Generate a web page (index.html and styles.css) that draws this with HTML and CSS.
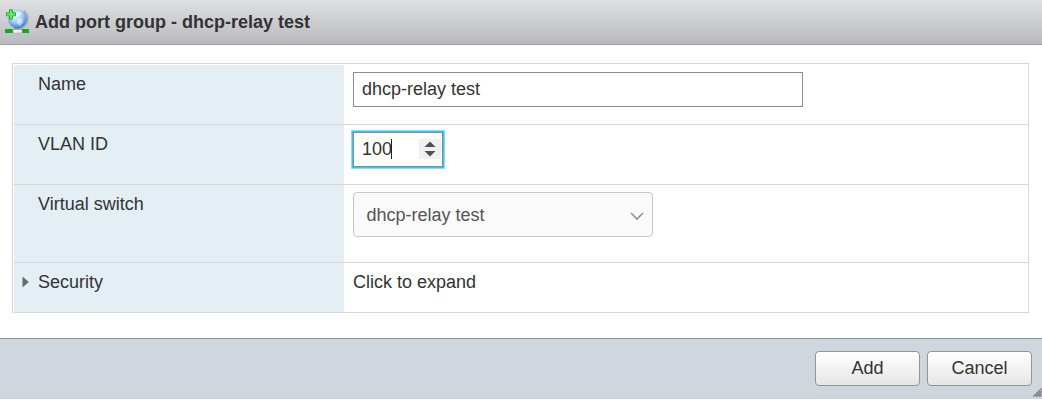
FILE: index.html
```html
<!DOCTYPE html>
<html lang="en">
<head>
<meta charset="utf-8">
<title>Add port group - dhcp-relay test</title>
<link rel="stylesheet" href="styles.css">
</head>
<body>
<div class="dialog">
  <header class="titlebar">
    <svg class="globe" width="24" height="25" viewBox="0 0 24 25">
      <defs>
        <radialGradient id="sphere" cx=".42" cy=".35" r=".65">
          <stop offset="0" stop-color="#e2f2fd"/>
          <stop offset=".55" stop-color="#a0caf4"/>
          <stop offset="1" stop-color="#3a7ad4"/>
        </radialGradient>
      </defs>
      <rect x="0" y="20" width="24" height="4" fill="#12ad16"/>
      <path d="M9 18h8v3h-8z" fill="#8e9298"/>
      <path d="M8 20.500h9v3.500h-9z" fill="#f1f1f1" stroke="#a4a4a4" stroke-width=".6"/>
      <circle cx="12.500" cy="9.800" r="9.600" fill="url(#sphere)"/>
      <path d="M11 3l5-1 1 3-3 2-4 1-2 4-2-2 1-4zM13 9l4 1 1 3-3 4-3-3z" fill="#f0f9ff" opacity=".55"/>
      <path d="M19 2C25.500 6.500 24 17 15 20" fill="none" stroke="#a5adb8" stroke-width="1.600"/>
      <path d="M4.500.8h3v3h3v3h-3v3.400h-3V6.800h-3v-3h3z" fill="#6be660" stroke="#2aae30" stroke-linejoin="round"/>
    </svg>
    <h1 class="title">Add port group - dhcp-relay test</h1>
  </header>
  <main class="content">
    <div class="form">
      <div class="row">
        <div class="label">Name</div>
        <div class="value"><div class="text-input">dhcp-relay test</div></div>
      </div>
      <div class="row">
        <div class="label">VLAN ID</div>
        <div class="value">
          <div class="number-input">
            <span class="number">100</span><span class="caret"></span>
            <svg class="spinner" width="22" height="20" viewBox="0 0 22 20">
              <path d="M11 2.500l5.500 5.500h-11zM11 17.500L5.500 12h11z" fill="#505050"/>
            </svg>
          </div>
        </div>
      </div>
      <div class="row row-tall">
        <div class="label">Virtual switch</div>
        <div class="value">
          <div class="select">dhcp-relay test
            <svg width="14" height="9" viewBox="0 0 14 9"><path d="M1 1l6 6 6-6" fill="none" stroke="#949494" stroke-width="1.700"/></svg>
          </div>
        </div>
      </div>
      <div class="row row-short">
        <div class="label label-expand">
          <svg width="7" height="12" viewBox="0 0 7 12"><path d="M.5.5L6.800 6l-6.300 5.500z" fill="#6c6c6c"/></svg>Security</div>
        <div class="value value-text">Click to expand</div>
      </div>
    </div>
  </main>
  <footer class="footer">
    <div class="button">Add</div>
    <div class="button">Cancel</div>
    <svg class="resizer" width="9" height="9" viewBox="0 0 9 9">
      <path d="M8.500 0v8.500H0z" fill="#a2a6aa"/>
      <path d="M.5 8.500l8-8M3.500 8.500l5-5M6.500 8.500l2-2" stroke="#666a6e" stroke-width="1.200" stroke-dasharray="1.400 .7"/>
    </svg>
  </footer>
</div>
</body>
</html>
```
FILE: styles.css
```css
* { box-sizing: border-box; }
body {
  margin: 0;
  background: #fff;
  color: #333;
  font: 18px/22px "Liberation Sans", Arial, sans-serif;
}
svg { display: block; flex: none; }
.dialog { height: 399px; display: flex; flex-direction: column; }
.titlebar {
  height: 45px;
  flex: none;
  display: flex;
  align-items: center;
  gap: 6px;
  padding-left: 5px;
  background: linear-gradient(#dfe0e4, #b9babd);
  border-bottom: 1px solid #a0a0a0;
}
.globe { margin-top: -2px; }
.title { margin: 0; font-size: 18px; font-weight: bold; line-height: 22px; }
.content { flex: 1; padding: 18px 13px 0 12px; }
.form {
  border: 1px solid #d6d6d6;
  border-bottom: 0;
  padding: 1px 0 0 1px;
}
.row {
  height: 60px;
  display: grid;
  grid-template-columns: 330px 1fr;
  border-bottom: 1px solid #d6d6d6;
}
.row-tall { height: 78px; }
.row-short { height: 50px; }
.label { background: #e4eff5; padding: 8px 0 0 24px; }
.label-expand { display: flex; gap: 9px; padding-left: 8px; }
.label-expand svg { margin-top: 5px; }
.value { padding: 7px 0 0 9px; }
.value-text { padding-top: 8px; }
.text-input {
  width: 450px;
  height: 35px;
  border: 1px solid #8c8c8c;
  padding: 5px 8px;
}
.number-input {
  width: 90px;
  height: 35px;
  display: flex;
  align-items: center;
  border: 1px solid #8c8c8c;
  padding: 0 1px 2px 8px;
  box-shadow: 0 0 0 1px #2fc6fb, 0 0 0 2px #83dffc;
}
.caret { width: 1px; height: 20px; background: #222; margin-left: -1px; }
.spinner { margin-left: auto; background: #f0f0f0; }
.select {
  width: 300px;
  height: 45px;
  display: flex;
  align-items: center;
  justify-content: space-between;
  padding: 0 8px 0 12.5px;
  border: 1px solid #c8c8c8;
  border-radius: 4px;
  background: #fafafa;
  color: #555;
}
.select svg { margin-top: 3px; }
.footer {
  position: relative;
  height: 61px;
  flex: none;
  display: flex;
  justify-content: flex-end;
  gap: 7px;
  padding: 12px 10px 0 0;
  border-top: 1px solid #8c8e90;
  background: #d0d6de;
}
.button {
  width: 105px;
  height: 35px;
  border: 1px solid #949494;
  border-radius: 4px;
  background: linear-gradient(#fff, #e6e6e6);
  line-height: 33px;
  text-align: center;
}
.resizer { position: absolute; right: 0; bottom: 2px; }
```
